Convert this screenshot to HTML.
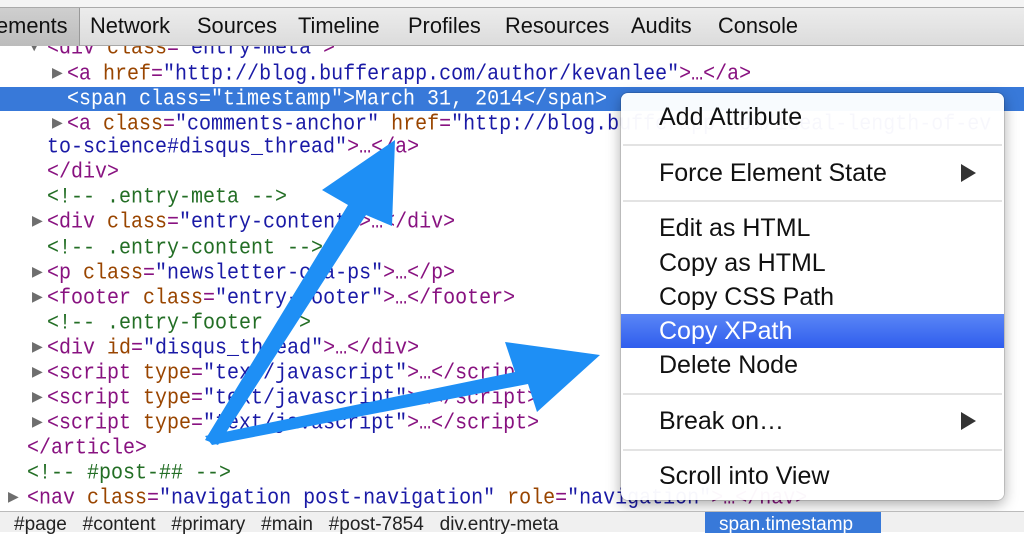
<!DOCTYPE html>
<html><head><meta charset="utf-8"><style>
*{margin:0;padding:0;box-sizing:border-box}
body{width:1024px;height:532px;overflow:hidden;background:#fff;position:relative;font-family:"Liberation Sans",sans-serif}
.top{position:absolute;left:0;top:0;width:1024px;height:7px;background:#f4f4f4}
.tabs{position:absolute;left:0;top:7px;width:1024px;height:39px;background:linear-gradient(#ececec,#dcdcdc);border-top:1px solid #aaa;border-bottom:1px solid #a8a8a8}
.tab{position:absolute;top:5px;font-size:22.5px;color:#111;transform:scaleX(.97);transform-origin:left}
.sel{position:absolute;left:0;top:0;width:80px;height:38px;background:linear-gradient(#cfcfcf,#bcbcbc);border-right:1px solid #999}
.code{position:absolute;left:0;top:0;width:1024px;font-family:"Liberation Mono",monospace;font-size:20px;}
.l{position:absolute;white-space:pre;height:25px;line-height:25px;transform:scaleY(1.12)}
.t{color:#881280}.a{color:#994500}.v{color:#1a1aa6}.c{color:#236e25}
.tri{position:absolute;color:#6e6e6e;font-size:14px;line-height:25px}
.hl{position:absolute;left:0;top:87px;width:1024px;height:24px;background:#3879d9}
.menu{position:absolute;left:621px;top:93px;width:383px;height:407px;background:rgba(255,255,255,.97);border-radius:7px;box-shadow:0 4px 14px rgba(0,0,0,.35),0 0 0 1px rgba(0,0,0,.12)}
.mi{position:absolute;left:38px;font-size:25px;color:#111;line-height:34px}
.sep{position:absolute;left:2px;width:379px;height:2px;background:#e3e3e3}
.arr{position:absolute;right:28px;width:0;height:0;border-left:15px solid #333;border-top:9px solid transparent;border-bottom:9px solid transparent}
.bc{position:absolute;left:0;top:511px;width:1024px;height:21px;background:#f0f0f0;border-top:1px solid #bbb;font-size:19px;color:#222;white-space:pre}
</style></head><body>
<div class="top"></div>
<div class="code">
<div class="hl"></div>
<span class="tri" style="left:30px;top:36px">▼</span>
<div class="l" style="left:47px;top:36px"><span class="t">&lt;div </span><span class="a">class</span><span class="t">=</span><span class="v">"entry-meta"</span><span class="t">&gt;</span></div>
<span class="tri" style="left:52px;top:62px">▶</span>
<div class="l" style="left:67px;top:62px"><span class="t">&lt;a </span><span class="a">href</span><span class="t">=</span><span class="v">"http://blog.bufferapp.com/author/kevanlee"</span><span class="t">&gt;…&lt;/a&gt;</span></div>
<div class="l" style="left:67px;top:87px;color:#fff">&lt;span class="timestamp"&gt;March 31, 2014&lt;/span&gt;</div>
<span class="tri" style="left:52px;top:112px">▶</span>
<div class="l" style="left:67px;top:112px"><span class="t">&lt;a </span><span class="a">class</span><span class="t">=</span><span class="v">"comments-anchor"</span> <span class="a">href</span><span class="t">=</span><span class="v">"http://blog.bufferapp.com/ideal-length-of-ev</span></div>
<div class="l" style="left:47px;top:135px"><span class="v">to-science#disqus_thread"</span><span class="t">&gt;…&lt;/a&gt;</span></div>
<div class="l" style="left:47px;top:160px"><span class="t">&lt;/div&gt;</span></div>
<div class="l" style="left:47px;top:185px"><span class="c">&lt;!-- .entry-meta --&gt;</span></div>
<span class="tri" style="left:32px;top:210px">▶</span>
<div class="l" style="left:47px;top:210px"><span class="t">&lt;div </span><span class="a">class</span><span class="t">=</span><span class="v">"entry-content"</span><span class="t">&gt;…&lt;/div&gt;</span></div>
<div class="l" style="left:47px;top:236px"><span class="c">&lt;!-- .entry-content --&gt;</span></div>
<span class="tri" style="left:32px;top:261px">▶</span>
<div class="l" style="left:47px;top:261px"><span class="t">&lt;p </span><span class="a">class</span><span class="t">=</span><span class="v">"newsletter-cta-ps"</span><span class="t">&gt;…&lt;/p&gt;</span></div>
<span class="tri" style="left:32px;top:286px">▶</span>
<div class="l" style="left:47px;top:286px"><span class="t">&lt;footer </span><span class="a">class</span><span class="t">=</span><span class="v">"entry-footer"</span><span class="t">&gt;…&lt;/footer&gt;</span></div>
<div class="l" style="left:47px;top:311px"><span class="c">&lt;!-- .entry-footer --&gt;</span></div>
<span class="tri" style="left:32px;top:336px">▶</span>
<div class="l" style="left:47px;top:336px"><span class="t">&lt;div </span><span class="a">id</span><span class="t">=</span><span class="v">"disqus_thread"</span><span class="t">&gt;…&lt;/div&gt;</span></div>
<span class="tri" style="left:32px;top:361px">▶</span>
<div class="l" style="left:47px;top:361px"><span class="t">&lt;script </span><span class="a">type</span><span class="t">=</span><span class="v">"text/javascript"</span><span class="t">&gt;…&lt;/script&gt;</span></div>
<span class="tri" style="left:32px;top:386px">▶</span>
<div class="l" style="left:47px;top:386px"><span class="t">&lt;script </span><span class="a">type</span><span class="t">=</span><span class="v">"text/javascript"</span><span class="t">&gt;…&lt;/script&gt;</span></div>
<span class="tri" style="left:32px;top:411px">▶</span>
<div class="l" style="left:47px;top:411px"><span class="t">&lt;script </span><span class="a">type</span><span class="t">=</span><span class="v">"text/javascript"</span><span class="t">&gt;…&lt;/script&gt;</span></div>
<div class="l" style="left:27px;top:436px"><span class="t">&lt;/article&gt;</span></div>
<div class="l" style="left:27px;top:461px"><span class="c">&lt;!-- #post-## --&gt;</span></div>
<span class="tri" style="left:8px;top:486px">▶</span>
<div class="l" style="left:27px;top:486px"><span class="t">&lt;nav </span><span class="a">class</span><span class="t">=</span><span class="v">"navigation post-navigation"</span> <span class="a">role</span><span class="t">=</span><span class="v">"navigation"</span><span class="t">&gt;…&lt;/nav&gt;</span></div>
</div>
<div class="tabs"><div class="sel"></div>
<span class="tab" style="left:-4px">ements</span>
<span class="tab" style="left:90px">Network</span>
<span class="tab" style="left:197px">Sources</span>
<span class="tab" style="left:298px">Timeline</span>
<span class="tab" style="left:408px">Profiles</span>
<span class="tab" style="left:505px">Resources</span>
<span class="tab" style="left:631px">Audits</span>
<span class="tab" style="left:718px">Console</span>
</div>
<svg style="position:absolute;left:0;top:0" width="1024" height="532">
<polygon points="205,440 348,205 322,190 395,140 392,226 366,215 218,445" fill="#1e8ff5"/>
<polygon points="205,436 515,372 505,342 600,355 537,412 528,384 212,445" fill="#1e8ff5"/>
</svg>
<div class="menu">
<div class="mi" style="top:7px">Add Attribute</div>
<div class="sep" style="top:51px"></div>
<div class="mi" style="top:63px">Force Element State</div><div class="arr" style="top:71px"></div>
<div class="sep" style="top:107px"></div>
<div class="mi" style="top:118px">Edit as HTML</div>
<div class="mi" style="top:153px">Copy as HTML</div>
<div class="mi" style="top:187px">Copy CSS Path</div>
<div style="position:absolute;left:0;top:221px;width:383px;height:34px;background:linear-gradient(#5a86f6,#2f5ded)"></div>
<div class="mi" style="top:221px;color:#fff">Copy XPath</div>
<div class="mi" style="top:255px">Delete Node</div>
<div class="sep" style="top:300px"></div>
<div class="mi" style="top:311px">Break on…</div><div class="arr" style="top:319px"></div>
<div class="sep" style="top:356px"></div>
<div class="mi" style="top:366px">Scroll into View</div>
</div>
<div class="bc"><span style="position:absolute;left:14px;top:2px">#page   #content   #primary   #main   #post-7854   div.entry-meta</span><span style="position:absolute;left:705px;top:0;width:176px;height:21px;background:#3879d9;color:#fff;padding:2px 0 0 14px">span.timestamp</span></div>
</body></html>
